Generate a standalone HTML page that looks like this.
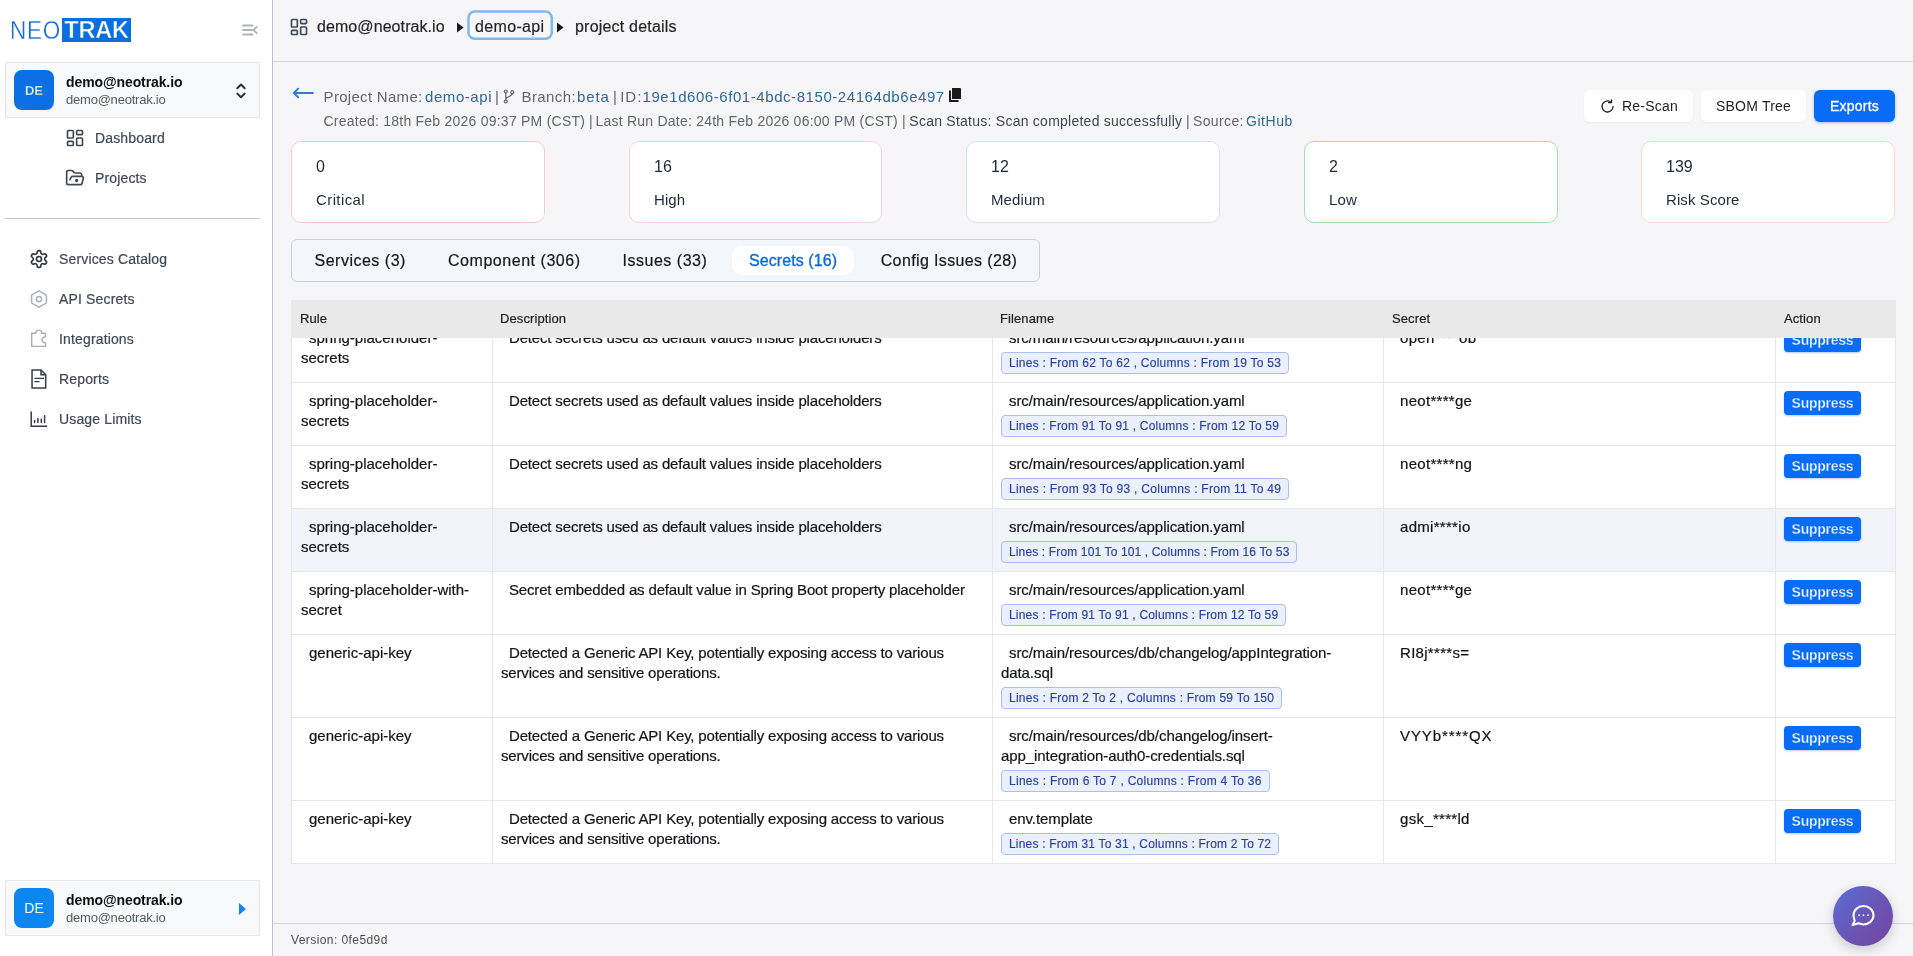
<!DOCTYPE html>
<html lang="en">
<head>
<meta charset="utf-8">
<title>NeoTrak - project details</title>
<style>
*{box-sizing:border-box;margin:0;padding:0}
html,body{width:1913px;height:956px;overflow:hidden}
body{font-family:"Liberation Sans",Arial,sans-serif;background:#f6f6f8;color:#1f2937;position:relative;-webkit-font-smoothing:antialiased;will-change:transform}
.abs{position:absolute}
svg{display:block}
/* ---------- sidebar ---------- */
#sidebar{position:absolute;left:0;top:0;width:273px;height:956px;background:#fff;border-right:1px solid #bcc1d2}
.logo{position:absolute;left:10px;top:18px;height:24px;display:flex;align-items:center}
.logo .neo{font-size:25px;color:#1a6fd6;line-height:24px;width:52px;display:inline-block;transform:scaleX(.9);transform-origin:0 50%;-webkit-text-stroke:0.3px #fff;letter-spacing:0.8px}
.logo .trak{background:#0c6fe0;color:#fff;font-size:23.5px;font-weight:700;line-height:25px;height:24px;width:69px;text-align:center;letter-spacing:-0.2px;-webkit-text-stroke:0.45px #0c6fe0}
.acct{position:absolute;left:5px;width:255px;height:56px;background:#f7f9fb;border:1px solid #e3e6ea;border-radius:2px}
.acct .av{position:absolute;left:8px;top:7px;width:40px;height:40px;border-radius:8px;background:#0c6fe4;color:#fff;font-size:13px;font-weight:700;text-align:center;line-height:41px;letter-spacing:0;-webkit-text-stroke:0.3px #0c6fe4}
.acct .n1{position:absolute;left:60px;top:10.300px;font-size:14px;font-weight:700;color:#0b0f14;line-height:18px;white-space:nowrap;letter-spacing:-0.1px}
.acct .n2{position:absolute;left:60px;top:29px;font-size:13px;color:#555b63;line-height:16px;white-space:nowrap;letter-spacing:-0.22px}
.nav{position:absolute;font-size:14px;color:#3f4856;-webkit-text-stroke:0.2px #3f4856;line-height:20px;white-space:nowrap;letter-spacing:0.15px}
.ico{position:absolute}
.divider{position:absolute;left:5px;top:218px;width:255px;height:1px;background:#c4c8cd}
/* ---------- topbar ---------- */
#topbar{position:absolute;left:273px;top:0;width:1640px;height:62px;border-bottom:1px solid #d2d5da}
.bc{position:absolute;top:17px;font-size:16px;line-height:20px;color:#1f2329;white-space:nowrap;-webkit-text-stroke:0.2px #1f2329}
.tri{position:absolute;width:0;height:0;border-left:6.500px solid #15181c;border-top:5px solid transparent;border-bottom:5px solid transparent}
/* ---------- project info ---------- */
.pinfo{position:absolute;white-space:nowrap;color:#61666c}
.pinfo.lnk{color:#2e6a96}
.l1{top:86.500px;font-size:15px;line-height:20px}
.l2{top:112px;font-size:14px;line-height:18px}
.btn{position:absolute;top:90px;height:32px;border-radius:6px;background:#fff;font-size:14px;line-height:32px;color:#1c1f23;text-align:center;box-shadow:0 1px 2px rgba(0,0,0,.05);letter-spacing:0.2px}
.card{position:absolute;top:141px;width:254px;height:82px;background:#fff;border-radius:10px;border:1px solid #ccc}
.card .v{position:absolute;left:24px;top:15px;font-size:16px;line-height:20px;color:#1f2937}
.card .l{position:absolute;left:24px;top:48px;font-size:15px;line-height:20px;color:#1f2937;white-space:nowrap;letter-spacing:0.1px}
/* ---------- tabs ---------- */
#tabs{position:absolute;left:291px;top:239px;width:749px;height:43px;background:#f3f6fb;border:1px solid #c3d0e4;border-radius:6px}
.tab{position:absolute;top:11px;font-size:16px;line-height:20px;color:#15181c;-webkit-text-stroke:0.2px #15181c;white-space:nowrap;letter-spacing:0.3px}
.tab.on{top:6px;height:29px;background:#fff;border-radius:10px;color:#0b6bd3;line-height:30px;text-align:center;letter-spacing:0.1px;-webkit-text-stroke:0.35px #0b6bd3}
/* ---------- table ---------- */
#thead{position:absolute;left:291px;top:300px;width:1605px;height:38px;background:#e9e9e9;z-index:3}
#thead span{position:absolute;top:10px;font-size:13px;line-height:17px;color:#1b1e22;letter-spacing:0.1px;-webkit-text-stroke:0.2px #1b1e22}
#tbody{position:absolute;left:291px;top:338px;width:1605px;height:526px;overflow:hidden;background:#fff;border-bottom:1px solid #e6e7ea}
.row{position:absolute;left:0;width:1605px;background:#fff;border-top:1px solid #e6e7ea;border-right:1px solid #e6e7ea}
.row.hl{background:#f3f3fb}
.c{position:absolute;top:0;bottom:0;border-left:1px solid #e6e7ea;padding:8px 8px 0 8px;font-size:15px;line-height:20px;color:#121418;text-indent:8px;-webkit-text-stroke:0.2px #121418}
.c1{left:0;width:201px;padding-left:9px}
.c2{left:201px;width:500px;letter-spacing:-0.165px}
.c3{left:701px;width:391px;letter-spacing:-0.08px}
.c4{left:1092px;width:392px;letter-spacing:0.3px}
.c5{left:1484px;width:120px;text-indent:0}
.bdg{-webkit-text-stroke:0.15px #2a41a6;display:inline-block;text-indent:0;margin-top:4px;height:22px;padding:0 7px;border:1px solid #a9bfee;border-radius:4px;background:#eaf0fd;color:#2a41a6;font-size:12px;line-height:20px;letter-spacing:0.25px;white-space:nowrap;vertical-align:top}
.sup{position:absolute;left:8px;top:8px;width:77px;height:24px;border-radius:4px;background:#086cf7;color:#fff;font-size:14px;font-weight:700;line-height:24px;text-align:center;text-indent:0;letter-spacing:-0.25px;-webkit-text-stroke:0.35px #086cf7;box-shadow:0 1px 2px rgba(13,110,253,.35)}
/* ---------- footer ---------- */
#foot{position:absolute;left:273px;top:923px;width:1640px;height:33px;border-top:1px solid #d2d5da}
#foot span{position:absolute;left:18px;top:9px;font-size:12px;line-height:14px;color:#4a4f56;letter-spacing:0.42px}
#chat{position:absolute;left:1833px;top:886px;width:60px;height:60px;border-radius:50%;background:linear-gradient(135deg,#5a6fd8 0%,#6a54b4 55%,#7244a0 100%);box-shadow:0 4px 12px rgba(0,0,0,.18);z-index:5}
</style>
</head>
<body>

<!-- ================= SIDEBAR ================= -->
<div id="sidebar">
  <div class="logo"><span class="neo">NEO</span><span class="trak">TRAK</span></div>
  <svg class="ico" style="left:242px;top:24px" width="16" height="12" viewBox="0 0 16 12" fill="none" stroke="#adb3bc" stroke-width="1.800" stroke-linecap="round" stroke-linejoin="round"><path d="M1 1.500h9.500M1 6h9M1 10.500h9.500M14.800 2.800l-3.200 3.200 3.200 3.200"/></svg>

  <div class="acct" style="top:62px">
    <div class="av">DE</div>
    <div class="n1">demo@neotrak.io</div>
    <div class="n2">demo@neotrak.io</div>
    <svg class="ico" style="left:229px;top:16.500px" width="12" height="22" viewBox="0 0 12 22" fill="none" stroke="#2b3037" stroke-width="2" stroke-linecap="round" stroke-linejoin="round"><path d="M2.300 8.200l3.700-3.700 3.700 3.700M2.300 13.600l3.700 3.700 3.700-3.700"/></svg>
  </div>

  <svg class="ico" style="left:65px;top:128px" width="20" height="20" viewBox="0 0 24 24" fill="none" stroke="#3f4856" stroke-width="2" stroke-linecap="round" stroke-linejoin="round"><rect width="7" height="9" x="3" y="3" rx="1"/><rect width="7" height="5" x="14" y="3" rx="1"/><rect width="7" height="9" x="14" y="12" rx="1"/><rect width="7" height="5" x="3" y="16" rx="1"/></svg>
  <div class="nav" style="left:95px;top:128px">Dashboard</div>
  <svg class="ico" style="left:65px;top:168px" width="20" height="20" viewBox="0 0 24 24" fill="none" stroke="#3f4856" stroke-width="2" stroke-linecap="round" stroke-linejoin="round"><path d="m6 14 1.450-2.900A2 2 0 0 1 9.240 10H20a2 2 0 0 1 1.940 2.500l-1.550 6a2 2 0 0 1-1.940 1.500H4a2 2 0 0 1-2-2V5a2 2 0 0 1 2-2h3.930a2 2 0 0 1 1.660.900l.820 1.200a2 2 0 0 0 1.660.900H18a2 2 0 0 1 2 2v2"/><circle cx="14" cy="15" r="1"/></svg>
  <div class="nav" style="left:95px;top:168px">Projects</div>

  <div class="divider"></div>

  <!-- gear -->
  <svg class="ico" style="left:29px;top:249px" width="20" height="20" viewBox="0 0 24 24" fill="none" stroke="#2f3742" stroke-width="2" stroke-linecap="round" stroke-linejoin="round"><path d="M12.22 2h-.44a2 2 0 0 0-2 2v.18a2 2 0 0 1-1 1.730l-.43.250a2 2 0 0 1-2 0l-.15-.08a2 2 0 0 0-2.730.730l-.22.380a2 2 0 0 0 .73 2.730l.15.100a2 2 0 0 1 1 1.720v.510a2 2 0 0 1-1 1.740l-.15.090a2 2 0 0 0-.73 2.730l.22.380a2 2 0 0 0 2.730.730l.15-.08a2 2 0 0 1 2 0l.43.250a2 2 0 0 1 1 1.730V20a2 2 0 0 0 2 2h.44a2 2 0 0 0 2-2v-.18a2 2 0 0 1 1-1.730l.43-.25a2 2 0 0 1 2 0l.15.080a2 2 0 0 0 2.730-.73l.22-.39a2 2 0 0 0-.73-2.730l-.15-.08a2 2 0 0 1-1-1.740v-.5a2 2 0 0 1 1-1.740l.15-.09a2 2 0 0 0 .73-2.730l-.22-.38a2 2 0 0 0-2.730-.73l-.15.080a2 2 0 0 1-2 0l-.43-.25a2 2 0 0 1-1-1.730V4a2 2 0 0 0-2-2z"/><circle cx="12" cy="12" r="3"/></svg>
  <div class="nav" style="left:59px;top:249px">Services Catalog</div>

  <svg class="ico" style="left:29px;top:289px" width="20" height="20" viewBox="0 0 20 20" fill="none" stroke="#aab1ba" stroke-width="1.500" stroke-linejoin="round"><path d="M10 1.800l6.800 3.900c.4.200.6.600.6 1v6.600c0 .4-.2.800-.6 1L10 18.200l-6.800-3.900c-.4-.2-.6-.6-.6-1V6.700c0-.4.200-.8.600-1z"/><circle cx="10" cy="10" r="2.600"/></svg>
  <div class="nav" style="left:59px;top:289px">API Secrets</div>

  <svg class="ico" style="left:29px;top:329px" width="20" height="20" viewBox="0 0 20 20" fill="none" stroke="#a5adb7" stroke-width="1.400" stroke-linejoin="round" stroke-linecap="round"><path d="M2.700 4.300H6.900C6.500 2.600 7.900 1.100 9.850 1.100S13.200 2.600 12.800 4.300H16.500V8C14.500 7.700 13.100 9 13.100 10.800S14.500 13.900 16.500 13.600V17.400H2.700Z"/></svg>
  <div class="nav" style="left:59px;top:329px">Integrations</div>

  <svg class="ico" style="left:29px;top:369px" width="20" height="20" viewBox="0 0 20 20" fill="none" stroke="#343c48" stroke-width="1.500" stroke-linejoin="miter"><path d="M3.050 1h8.950l4.700 4.700V19H3.050Z"/><path d="M12 1v4.700h4.700"/><path d="M5.500 9.400h9.500M5.500 12.600h5" stroke-width="1.400"/></svg>
  <div class="nav" style="left:59px;top:369px">Reports</div>

  <svg class="ico" style="left:29px;top:409px" width="20" height="20" viewBox="0 0 20 20" fill="none" stroke="#343c48" stroke-width="1.500" stroke-linecap="butt"><path d="M2.200 2.500V17.200H18.200"/><path d="M5.600 13.600v-2.100M8.900 13.600v-4M12.300 13.600v-3.400M15.600 13.600v-6.900" stroke-linecap="round"/></svg>
  <div class="nav" style="left:59px;top:409px">Usage Limits</div>

  <div class="acct" style="top:880px;height:56px">
    <div class="av" style="background:#0d86f0;font-weight:400;font-size:14px;-webkit-text-stroke:0">DE</div>
    <div class="n1">demo@neotrak.io</div>
    <div class="n2">demo@neotrak.io</div>
    <div class="tri" style="left:233px;top:22px;border-left-color:#1686ee;border-left-width:7px;border-top-width:6px;border-bottom-width:6px"></div>
  </div>
</div>

<!-- ================= TOP BAR ================= -->
<div id="topbar"></div>
<svg class="ico" style="left:289px;top:16.500px" width="20" height="20" viewBox="0 0 24 24" fill="none" stroke="#3f4856" stroke-width="2" stroke-linecap="round" stroke-linejoin="round"><rect width="7" height="9" x="3" y="3" rx="1"/><rect width="7" height="5" x="14" y="3" rx="1"/><rect width="7" height="9" x="14" y="12" rx="1"/><rect width="7" height="5" x="3" y="16" rx="1"/></svg>
<div class="bc" style="left:317px;letter-spacing:0.08px">demo@neotrak.io</div>
<svg class="ico" style="left:457px;top:22px" width="8" height="12" viewBox="0 0 8 12"><path d="M0 0.400L6.500 5.500 0 10.600Z" fill="#15181c"/></svg>
<svg class="ico" style="left:466px;top:9px" width="88" height="32" viewBox="0 0 88 32" fill="none"><rect x="2.450" y="2.450" width="83.300" height="27.300" rx="6.200" stroke="#80b8ea" stroke-width="2.500"/></svg>
<div class="bc" style="left:475px;letter-spacing:0.35px">demo-api</div>
<svg class="ico" style="left:556.800px;top:22px" width="8" height="12" viewBox="0 0 8 12"><path d="M0 0.400L6.500 5.500 0 10.600Z" fill="#15181c"/></svg>
<div class="bc" style="left:575px;letter-spacing:0.2px">project details</div>

<!-- ================= PROJECT INFO ================= -->
<svg class="ico" style="left:292px;top:86px" width="22" height="14" viewBox="0 0 22 14" fill="none" stroke="#2a7be0" stroke-width="1.800" stroke-linecap="round" stroke-linejoin="round"><path d="M21 7H1.800M6.200 2.600L1.800 7l4.400 4.400"/></svg>
<div class="pinfo l1" style="left:323.600px;letter-spacing:0.3px">Project Name:</div>
<div class="pinfo l1 lnk" style="left:425px;letter-spacing:0.57px">demo-api</div>
<div class="pinfo l1" style="left:495px">|</div>
<svg class="ico" style="left:503px;top:89px" width="12" height="15" viewBox="0 0 12 15" fill="none" stroke="#61666c" stroke-width="1.200" stroke-linecap="round"><circle cx="2.800" cy="2.500" r="1.500"/><circle cx="2.800" cy="12.500" r="1.500"/><circle cx="9.200" cy="3.200" r="1.500"/><path d="M2.800 4v7M9.200 4.800c0 3.200-6.400 2.200-6.400 5.800"/></svg>
<div class="pinfo l1" style="left:521.600px;letter-spacing:0.38px">Branch:</div>
<div class="pinfo l1 lnk" style="left:577px;letter-spacing:0.9px">beta</div>
<div class="pinfo l1" style="left:613px">|</div>
<div class="pinfo l1" style="left:620.200px;letter-spacing:1px">ID:</div>
<div class="pinfo l1 lnk" style="left:642.500px;letter-spacing:0.565px">19e1d606-6f01-4bdc-8150-24164db6e497</div>
<svg class="ico" style="left:949px;top:88px" width="12" height="14" viewBox="0 0 12 14"><path d="M3 0h8.200c.4 0 .8.300.8.800V11H3z" fill="#1a1a1a"/><path d="M0 2.500h2V12h7.500v2H.8c-.5 0-.8-.3-.8-.8z" fill="#1a1a1a"/></svg>
<div class="pinfo l2" style="left:323.500px;letter-spacing:0.236px">Created: 18th Feb 2026 09:37 PM (CST)</div>
<div class="pinfo l2" style="left:589px">|</div>
<div class="pinfo l2" style="left:595.400px;letter-spacing:0.233px">Last Run Date: 24th Feb 2026 06:00 PM (CST)</div>
<div class="pinfo l2" style="left:902px">|</div>
<div class="pinfo l2" style="left:909.300px;color:#3e4652;letter-spacing:0.249px">Scan Status: Scan completed successfully</div>
<div class="pinfo l2" style="left:1186px">|</div>
<div class="pinfo l2" style="left:1193px;letter-spacing:0.37px">Source:</div>
<div class="pinfo l2 lnk" style="left:1246px;letter-spacing:0.54px">GitHub</div>

<div class="btn" style="left:1584px;width:109px"><svg style="position:absolute;left:16px;top:9px" width="15" height="15" viewBox="0 0 15 15" fill="none" stroke="#1c1f23" stroke-width="1.300" stroke-linecap="round" stroke-linejoin="round"><path d="M13 7.500a5.500 5.500 0 1 1-1.800-4.100"/><path d="M11.500 0.800v2.900H8.600"/></svg><span style="position:absolute;left:38px;top:0">Re-Scan</span></div>
<div class="btn" style="left:1701px;width:105px">SBOM Tree</div>
<div class="btn" style="left:1814px;width:81px;background:#086cf7;color:#fff;-webkit-text-stroke:0.3px #fff;box-shadow:0 1px 3px rgba(13,110,253,.4)">Exports</div>

<!-- ================= CARDS ================= -->
<div class="card" style="left:291px;border-color:#f5cace"><div class="v">0</div><div class="l" style="letter-spacing:0.4px">Critical</div></div>
<div class="card" style="left:629px;border-color:#f7cfe3;width:253px"><div class="v">16</div><div class="l">High</div></div>
<div class="card" style="left:966px;border-color:#d3dff4"><div class="v">12</div><div class="l">Medium</div></div>
<div class="card" style="left:1304px;border-color:#a9dbad"><div class="v">2</div><div class="l">Low</div></div>
<div class="card" style="left:1641px;border-color:#f8d8d0"><div class="v">139</div><div class="l">Risk Score</div></div>

<!-- ================= TABS ================= -->
<div id="tabs">
  <div class="tab" style="left:22.500px;letter-spacing:0.5px">Services (3)</div>
  <div class="tab" style="left:156px;letter-spacing:0.54px">Component (306)</div>
  <div class="tab" style="left:330.500px;letter-spacing:0.52px">Issues (33)</div>
  <div class="tab on" style="left:440.300px;width:121.500px">Secrets (16)</div>
  <div class="tab" style="left:588.700px;letter-spacing:0.37px">Config Issues (28)</div>
</div>

<!-- ================= TABLE ================= -->
<div id="thead">
  <span style="left:9px">Rule</span>
  <span style="left:209px">Description</span>
  <span style="left:709px">Filename</span>
  <span style="left:1101px">Secret</span>
  <span style="left:1493px">Action</span>
</div>
<div id="tbody">
  <div class="row" style="top:-19px;height:63px">
    <div class="c c1">spring-placeholder-secrets</div>
    <div class="c c2">Detect secrets used as default values inside placeholders</div>
    <div class="c c3">src/main/resources/application.yaml<br><span class="bdg" style="letter-spacing:0.25px">Lines : From 62 To 62 , Columns : From 19 To 53</span></div>
    <div class="c c4">open****ob</div>
    <div class="c c5"><div class="sup">Suppress</div></div>
  </div>
  <div class="row" style="top:44px;height:63px">
    <div class="c c1">spring-placeholder-secrets</div>
    <div class="c c2">Detect secrets used as default values inside placeholders</div>
    <div class="c c3">src/main/resources/application.yaml<br><span class="bdg" style="letter-spacing:0.207px">Lines : From 91 To 91 , Columns : From 12 To 59</span></div>
    <div class="c c4">neot****ge</div>
    <div class="c c5"><div class="sup">Suppress</div></div>
  </div>
  <div class="row" style="top:107px;height:63px">
    <div class="c c1">spring-placeholder-secrets</div>
    <div class="c c2">Detect secrets used as default values inside placeholders</div>
    <div class="c c3">src/main/resources/application.yaml<br><span class="bdg" style="letter-spacing:0.27px">Lines : From 93 To 93 , Columns : From 11 To 49</span></div>
    <div class="c c4">neot****ng</div>
    <div class="c c5"><div class="sup">Suppress</div></div>
  </div>
  <div class="row hl" style="top:170px;height:63px">
    <div class="c c1">spring-placeholder-secrets</div>
    <div class="c c2">Detect secrets used as default values inside placeholders</div>
    <div class="c c3">src/main/resources/application.yaml<br><span class="bdg" style="letter-spacing:0.138px">Lines : From 101 To 101 , Columns : From 16 To 53</span></div>
    <div class="c c4">admi****io</div>
    <div class="c c5"><div class="sup">Suppress</div></div>
  </div>
  <div class="row" style="top:233px;height:63px">
    <div class="c c1">spring-placeholder-with-secret</div>
    <div class="c c2">Secret embedded as default value in Spring Boot property placeholder</div>
    <div class="c c3">src/main/resources/application.yaml<br><span class="bdg" style="letter-spacing:0.19px">Lines : From 91 To 91 , Columns : From 12 To 59</span></div>
    <div class="c c4">neot****ge</div>
    <div class="c c5"><div class="sup">Suppress</div></div>
  </div>
  <div class="row" style="top:296px;height:83px">
    <div class="c c1">generic-api-key</div>
    <div class="c c2">Detected a Generic API Key, potentially exposing access to various services and sensitive operations.</div>
    <div class="c c3">src/main/resources/db/changelog/appIntegration-data.sql<br><span class="bdg" style="letter-spacing:0.25px">Lines : From 2 To 2 , Columns : From 59 To 150</span></div>
    <div class="c c4">RI8j****s=</div>
    <div class="c c5"><div class="sup">Suppress</div></div>
  </div>
  <div class="row" style="top:379px;height:83px">
    <div class="c c1">generic-api-key</div>
    <div class="c c2">Detected a Generic API Key, potentially exposing access to various services and sensitive operations.</div>
    <div class="c c3">src/main/resources/db/changelog/insert-app_integration-auth0-credentials.sql<br><span class="bdg" style="letter-spacing:0.28px">Lines : From 6 To 7 , Columns : From 4 To 36</span></div>
    <div class="c c4" style="letter-spacing:0.9px">VYYb****QX</div>
    <div class="c c5"><div class="sup">Suppress</div></div>
  </div>
  <div class="row" style="top:462px;height:63px">
    <div class="c c1">generic-api-key</div>
    <div class="c c2">Detected a Generic API Key, potentially exposing access to various services and sensitive operations.</div>
    <div class="c c3">env.template<br><span class="bdg" style="letter-spacing:0.186px">Lines : From 31 To 31 , Columns : From 2 To 72</span></div>
    <div class="c c4">gsk_****ld</div>
    <div class="c c5"><div class="sup">Suppress</div></div>
  </div>
</div>

<!-- ================= FOOTER ================= -->
<div id="foot"><span>Version: 0fe5d9d</span></div>
<div id="chat"><svg style="position:absolute;left:17px;top:18px" width="26" height="24" viewBox="0 0 26 24" fill="none" stroke="#fff" stroke-width="2" stroke-linecap="round" stroke-linejoin="round"><path d="M13.500 2c5.500 0 10 4.100 10 9.200s-4.500 9.200-10 9.200c-1.800 0-3.500-.4-5-1.200L2.500 21l2.300-4.400c-.8-1.600-1.300-3.400-1.300-5.400C3.500 6.100 8 2 13.500 2z"/><circle cx="9" cy="11.200" r=".9" fill="#fff" stroke="none"/><circle cx="13.500" cy="11.200" r=".9" fill="#fff" stroke="none"/><circle cx="18" cy="11.200" r=".9" fill="#fff" stroke="none"/></svg></div>

</body>
</html>
